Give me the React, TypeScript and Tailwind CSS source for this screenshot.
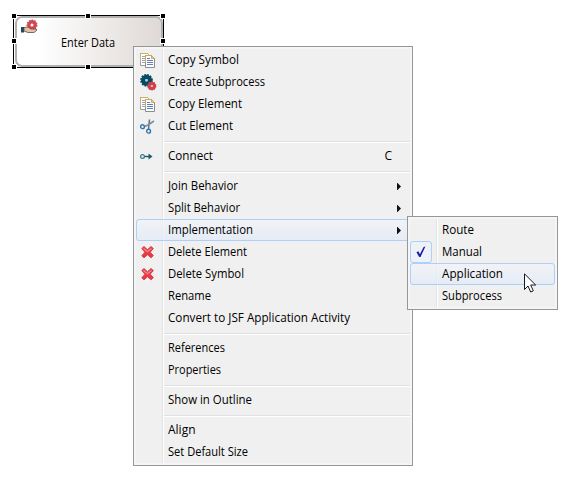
import React from "react";

type Item = { label: string; w: number; icon?: React.ReactNode; arrow?: boolean; key2?: string; hot?: boolean; checked?: boolean } | null;

const Copy = () => (
  <svg width="16" height="16" viewBox="0 0 16 16">
    <path d="M.5 1.500h7l2 2v10h-9z" fill="#fff" stroke="#a09c8c" />
    <path d="M.5 10V1.500h7l2 2" fill="none" stroke="#cdb062" />
    <path d="M2 4.500h3M2 6.500h3M2 8.500h3M2 10.500h3" stroke="#93a5c9" />
    <path d="M5.500 3.500h6l3 3v9h-9z" fill="#fafcff" stroke="#8c8e90" />
    <path d="M5.500 11V3.500h6l3 3" fill="none" stroke="#c9ab58" />
    <path d="M11.500 3.500v3h3z" fill="#ead797" stroke="#c9ab58" />
    <path d="M7 6.500h3M7 8.500h6M7 10.500h6M7 12.500h6" stroke="#6580ba" />
  </svg>
);
const Gears = () => (
  <svg width="17" height="17" viewBox="0 0 17 17">
    <circle cx="6.500" cy="6.300" r="5.500" fill="none" stroke="#064c60" strokeWidth="1.700" strokeDasharray="1.800 1.080" />
    <circle cx="6.500" cy="6.300" r="3.400" fill="none" stroke="#064c60" strokeWidth="4.200" />
    <circle cx="6.500" cy="6.300" r="1.100" fill="#a9c3c9" />
    <circle cx="11.800" cy="12" r="3.900" fill="none" stroke="#cf3f4e" strokeWidth="1.300" strokeDasharray="1.500 .950" />
    <circle cx="11.800" cy="12" r="2.500" fill="none" stroke="#cf3f4e" strokeWidth="3" />
    <circle cx="11.800" cy="12" r="1" fill="#eeb4b8" />
  </svg>
);
const Cut = () => (
  <svg width="16" height="16" viewBox="0 0 16 16" fill="none">
    <path d="M9.500 1.500L8.500 11.500" stroke="#5c6f87" strokeWidth="1.500" />
    <path d="M14 3L8 7 4.500 8.500" stroke="#7d8da0" strokeWidth="1.700" />
    <circle cx="2.500" cy="8.700" r="1.900" stroke="#2e77a8" strokeWidth="1.400" />
    <circle cx="8.600" cy="13.200" r="1.900" stroke="#2e77a8" strokeWidth="1.400" />
  </svg>
);
const Connect = () => (
  <svg width="16" height="16" viewBox="0 0 16 16" fill="none">
    <circle cx="2.500" cy="8.500" r="1.900" stroke="#397888" strokeWidth="1.200" />
    <path d="M4.500 8.500h5" stroke="#155c70" strokeWidth="1.400" />
    <path d="M8.500 5.500L12.500 8.500l-4 3z" fill="#155c70" />
  </svg>
);
const Del = () => (
  <svg width="16" height="16" viewBox="0 0 16 16">
    <path d="M4 2.500L7.500 5.800 11 2.500 13.300 4.500 10.200 8.300 13.300 11.500 11.200 13.800 7.500 10.800 4 13.800 1.800 11.800 4.900 8.300 1.800 4.500z" fill="#ea3845" stroke="#cf4650" strokeLinejoin="round" />
    <path d="M3.500 4.500L7.500 7.700 11.500 4.500" stroke="#f7898b" strokeWidth="1.200" fill="none" />
  </svg>
);
const Check = () => (
  <svg width="10" height="12" viewBox="0 0 10 12">
    <path d="M.5 6.300L2.400 5.300 3.900 8.200 7.600 1 9.400.500 4.500 11H3.200z" fill="#1a1aa6" />
  </svg>
);

const main: Item[] = [
  { label: "Copy Symbol", w: 71, icon: <Copy /> },
  { label: "Create Subprocess", w: 97, icon: <Gears /> },
  { label: "Copy Element", w: 74, icon: <Copy /> },
  { label: "Cut Element", w: 65, icon: <Cut /> },
  null,
  { label: "Connect", w: 45, icon: <Connect />, key2: "C" },
  null,
  { label: "Join Behavior", w: 70, arrow: true },
  { label: "Split Behavior", w: 72, arrow: true },
  { label: "Implementation", w: 85, arrow: true, hot: true },
  { label: "Delete Element", w: 79, icon: <Del /> },
  { label: "Delete Symbol", w: 76, icon: <Del /> },
  { label: "Rename", w: 43 },
  { label: "Convert to JSF Application Activity", w: 182 },
  null,
  { label: "References", w: 57 },
  { label: "Properties", w: 53 },
  null,
  { label: "Show in Outline", w: 84 },
  null,
  { label: "Align", w: 27.5 },
  { label: "Set Default Size", w: 80 },
];
const sub: Item[] = [
  { label: "Route", w: 32 },
  { label: "Manual", w: 40, checked: true },
  { label: "Application", w: 61, hot: true },
  { label: "Subprocess", w: 60 },
];

function Label({ text, width }: { text: string; width: number }) {
  return (
    <svg width={width + 2} height="22" className="shrink-0 overflow-visible">
      <text x="0" y="15" textLength={width} lengthAdjust="spacingAndGlyphs">{text}</text>
    </svg>
  );
}

function Menu({ items, className }: { items: Item[]; className: string }) {
  return (
    <div className={`absolute border border-[#979797] bg-[#f5f5f5] p-[2px] ${className}`}>
      <div className="relative bg-[#f0f0f0]">
        <div className="absolute top-0 bottom-0 left-[26px] w-[2px] border-l border-[#e2e3e3] bg-white" />
        {items.map((it, i) =>
          it === null ? (
            <div key={i} className="relative h-2 pt-1 pl-[28px]">
              <div className="h-[2px] border-t border-[#e0e0e0] bg-white" />
            </div>
          ) : (
            <div key={i} className="relative flex h-[22px] items-center">
              {it.hot && <div className="absolute inset-x-0 top-0 h-[22px] rounded-[3px] border border-[#aecff7] bg-linear-to-b from-[#f1f4f8]/70 to-[#e3ebf8]/80" />}
              <div className={`relative flex h-[22px] w-[22px] shrink-0 items-center justify-center ${it.checked ? "rounded-[3px] border border-[#aecff7] bg-[#edf2f9]" : "pl-[2px]"}`}>
                {it.checked ? <Check /> : it.icon}
              </div>
              <div className="relative w-[10px] shrink-0" />
              <div className="relative flex flex-1 items-center"><Label text={it.label} width={it.w} /></div>
              {it.key2 && <span className="relative mr-[18px]">{it.key2}</span>}
              {it.arrow && (
                <svg className="relative mt-px mr-[9px]" width="4" height="7" viewBox="0 0 4 7"><path d="M0 0h.5L4 3.500.5 7H0z" fill="#111" /></svg>
              )}
            </div>
          )
        )}
      </div>
    </div>
  );
}

const handles = [[14, 16], [88, 16], [163, 16], [14, 41], [163, 41], [14, 67], [88, 67]];

export default function App() {
  return (
    <div className="relative h-[486px] w-[573px] overflow-hidden bg-white font-['Open_Sans',sans-serif] text-[12px] text-black">
      <div className="absolute top-[15px] left-[13px] h-[53px] w-[151px] border border-black pl-px">
        <div className="relative flex h-full items-center justify-center rounded-[7px] border-2 border-[#b0b0b0] bg-linear-to-r from-white from-15% to-[#dfd9d6] pt-[2px]">
          <svg className="absolute top-[1px] left-[4px]" width="18" height="16" viewBox="0 0 18 16">
            <circle cx="11" cy="6" r="4.800" fill="none" stroke="#d24654" strokeWidth="1.400" strokeDasharray="1.700 1" />
            <circle cx="11" cy="6" r="3.100" fill="none" stroke="#d24654" strokeWidth="3.200" />
            <path d="M0 8h3v5.500H0z" fill="#164c60" />
            <path d="M3 8.500l4-.5 3 2h5l1 1-3 2.500H7L3 12z" fill="#e8c0a5" stroke="#594c4b" strokeWidth=".8" />
          </svg>
          <Label text="Enter Data" width={54} />
        </div>
      </div>
      {handles.map(([x, y]) => (
        <div key={`${x}-${y}`} className="absolute h-[6px] w-[6px] border border-white bg-black" style={{ left: x - 3, top: y - 3 }} />
      ))}
      <Menu items={main} className="top-[46px] left-[133px] w-[280px]" />
      <Menu items={sub} className="top-[216px] left-[407px] w-[151px]" />
      <svg className="absolute top-[273px] left-[524px]" width="13" height="20" viewBox="0 0 13 20">
        <path d="M.5.900V16.500L4 13l2.700 6 2.600-1.200L6.700 12h5z" fill="#fff" stroke="#111827" />
      </svg>
    </div>
  );
}
